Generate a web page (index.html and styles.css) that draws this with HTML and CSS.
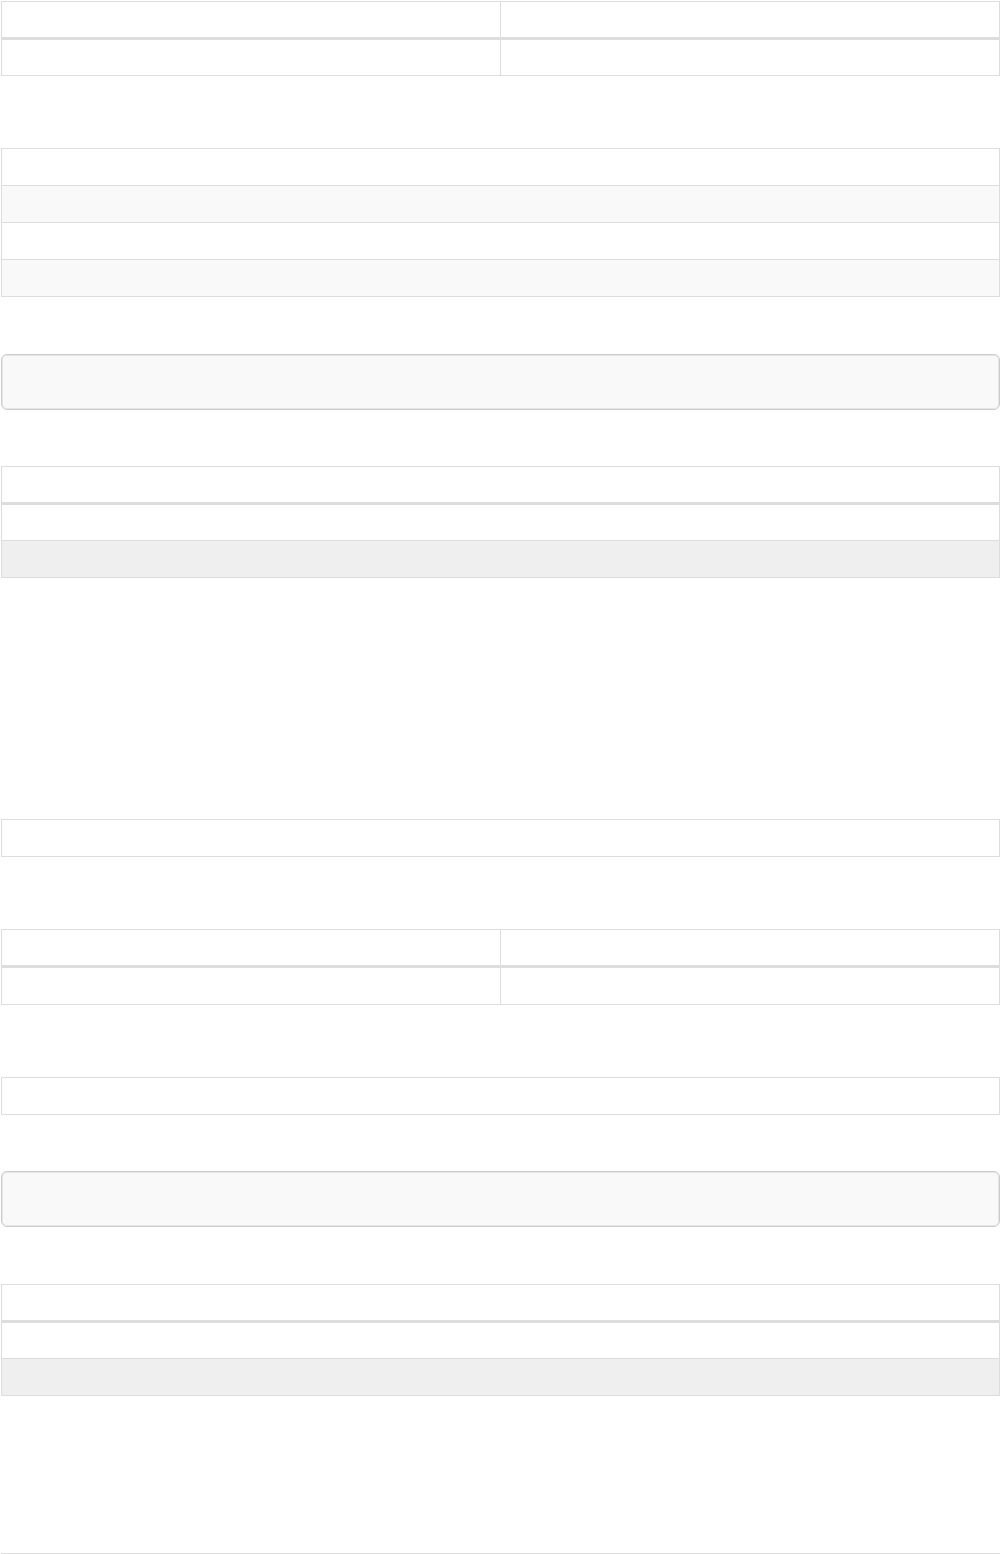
FILE: index.html
```html
<!DOCTYPE html>
<html lang="en">
<head>
<meta charset="utf-8">
<title>Tables</title>
<link rel="stylesheet" href="styles.css">
</head>
<body>
<main class="page">
  <div class="tbl t1">
    <div class="row head two"><div class="cell"></div><div class="cell"></div></div>
    <div class="row body first two"><div class="cell"></div><div class="cell"></div></div>
  </div>

  <div class="tbl t2">
    <div class="row std"><div class="cell"></div></div>
    <div class="row std stripe"><div class="cell"></div></div>
    <div class="row std"><div class="cell"></div></div>
    <div class="row std stripe"><div class="cell"></div></div>
  </div>

  <div class="box b1"></div>

  <div class="tbl t3">
    <div class="row head"><div class="cell"></div></div>
    <div class="row body first"><div class="cell"></div></div>
    <div class="row std active"><div class="cell"></div></div>
  </div>

  <div class="tbl t4">
    <div class="row std"><div class="cell"></div></div>
  </div>

  <div class="tbl t5">
    <div class="row head two"><div class="cell"></div><div class="cell"></div></div>
    <div class="row std two"><div class="cell"></div><div class="cell"></div></div>
  </div>

  <div class="tbl t6">
    <div class="row std"><div class="cell"></div></div>
  </div>

  <div class="box b2"></div>

  <div class="tbl t7">
    <div class="row head"><div class="cell"></div></div>
    <div class="row body first"><div class="cell"></div></div>
    <div class="row std active"><div class="cell"></div></div>
  </div>

  <div class="rule"></div>
</main>
</body>
</html>
```

FILE: styles.css
```css
* { box-sizing: border-box; }

html, body {
  margin: 0;
  padding: 0;
  background: #fff;
  font-family: "Liberation Sans", Arial, sans-serif;
  font-size: 14px;
  color: #333;
}

.page {
  width: 1000px;
  padding: 1px 1px 0 1px;
  display: flex;
  flex-direction: column;
}

.tbl {
  width: 999px;
  border-top: 1px solid #ddd;
  border-left: 1px solid #ddd;
}

.row {
  display: grid;
  grid-template-columns: 1fr;
}

.row.two {
  grid-template-columns: 499px 499px;
}

.cell {
  border-right: 1px solid #ddd;
  border-bottom: 1px solid #ddd;
}

.row.head .cell {
  height: 38px;
  border-bottom: 3px solid #ddd;
}

.row.body .cell { height: 36px; }
.row.std .cell { height: 37px; }

.row.stripe .cell { background: #f9f9f9; }
.row.active .cell { background: #efefef; }

.box {
  width: 999px;
  height: 56px;
  background: #f9f9f9;
  border: 1px solid #ccc;
  border-radius: 6px;
  box-shadow: inset 0 0 0 1px #e6e6e6;
}

.t2 { margin-top: 72px; }
.b1 { margin-top: 57px; }
.t3 { margin-top: 56px; }
.t4 { margin-top: 241px; }
.t5 { margin-top: 72px; }
.t5 .row.std .cell { height: 37px; }
.t6 { margin-top: 72px; }
.b2 { margin-top: 56px; }
.t7 { margin-top: 57px; }

.rule {
  margin-top: 157px;
  width: 999px;
  height: 1px;
  border-top: 1px solid #ddd;
}
```
